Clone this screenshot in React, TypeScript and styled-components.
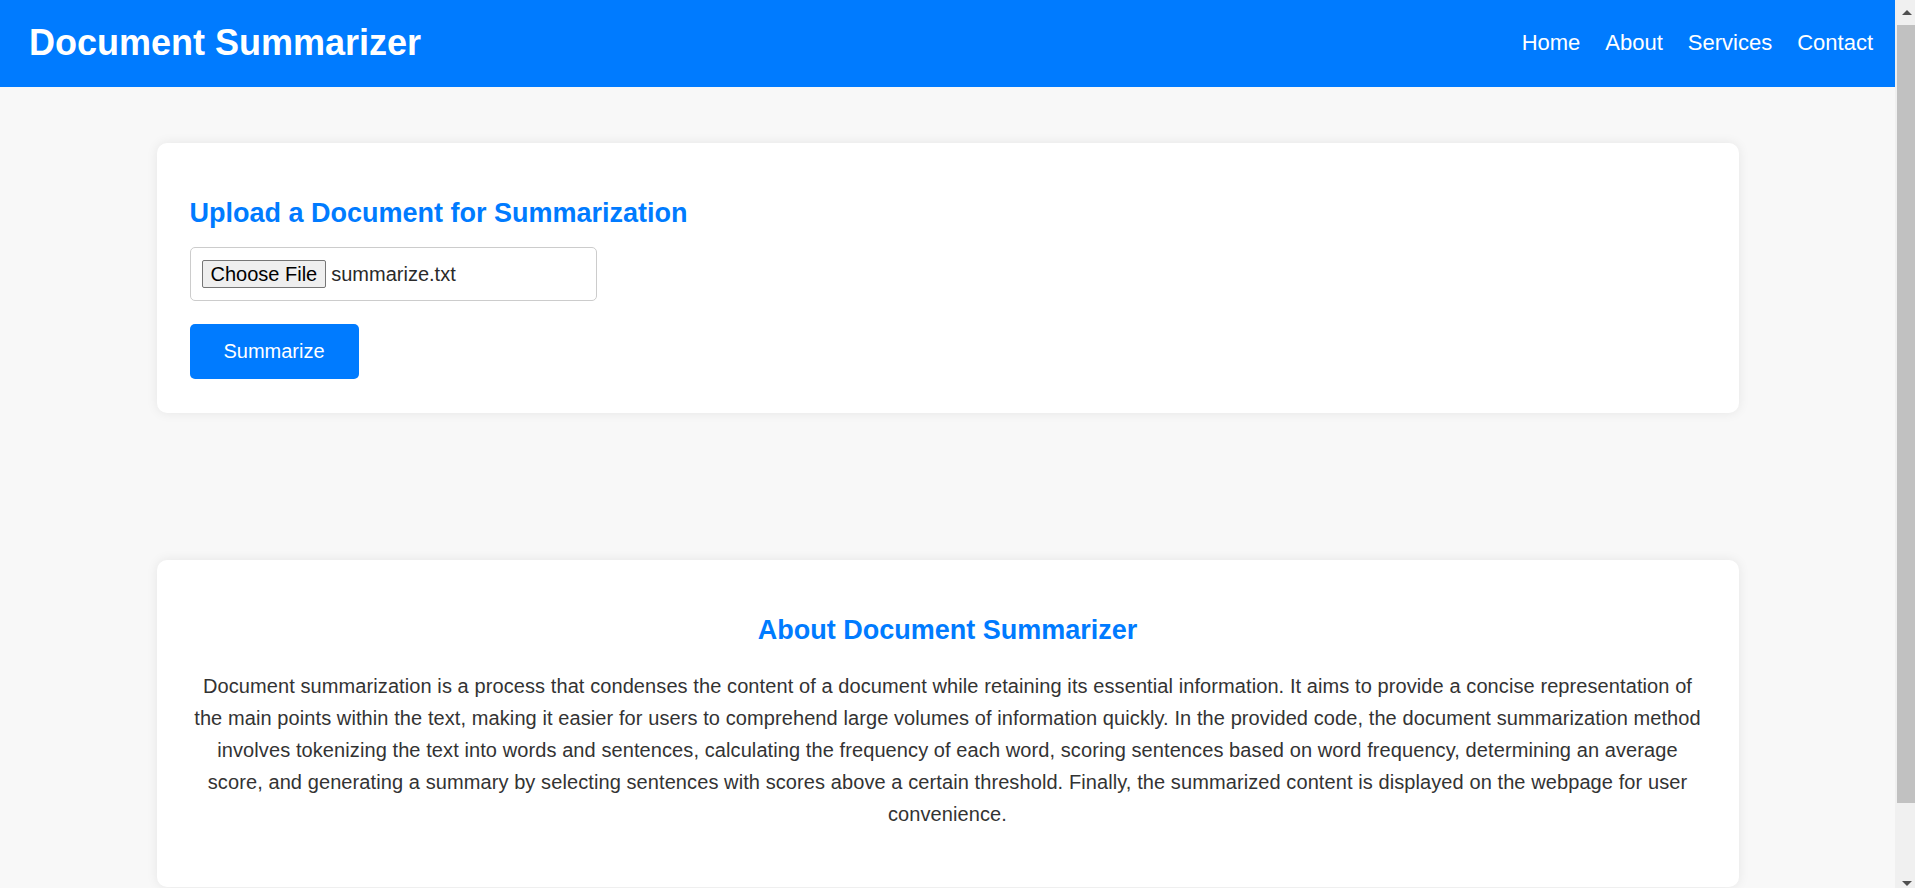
import React from "react";
import styled, { createGlobalStyle } from "styled-components";

const GlobalStyle = createGlobalStyle`
  html, body {
    margin: 0;
    padding: 0;
    overflow: hidden;
  }
  body {
    background: #f8f8f8;
    font-family: "Liberation Sans", Arial, Helvetica, sans-serif;
    color: #333333;
  }
`;

const Window = styled.div`
  display: flex;
  height: 100vh;
  overflow: hidden;
`;

const PageArea = styled.div`
  flex: 1;
  min-width: 0;
  overflow: hidden;
`;

const ScrollRail = styled.div`
  width: 20px;
  flex-shrink: 0;
  background: #f0f0f0;
  display: flex;
  flex-direction: column;
`;

const RailArrow = styled.div<{ $dir: "up" | "down" }>`
  height: ${(p) => (p.$dir === "up" ? 25 : 20)}px;
  flex-shrink: 0;
  box-sizing: border-box;
  display: flex;
  justify-content: center;
  padding-left: 4px;
  padding-top: ${(p) => (p.$dir === "up" ? 10 : 13)}px;
  margin-top: ${(p) => (p.$dir === "down" ? "auto" : "0")};

  &::before {
    content: "";
    width: 0;
    height: 0;
    border-left: 5px solid transparent;
    border-right: 5px solid transparent;
    ${(p) =>
      p.$dir === "up"
        ? "border-bottom: 5px solid #505050;"
        : "border-top: 5px solid #505050;"}
  }
`;

const RailThumb = styled.div`
  height: 778px;
  margin-left: 2px;
  background: #c1c1c1;
`;

const Header = styled.header`
  height: 87px;
  box-sizing: border-box;
  background: #007bff;
  display: flex;
  align-items: center;
  justify-content: space-between;
  padding: 0 22px 2px 29px;
`;

const Brand = styled.h1`
  margin: 0;
  color: #ffffff;
  font-size: 36px;
  font-weight: 700;
  line-height: normal;
`;

const Nav = styled.nav`
  display: flex;
  align-items: center;
  gap: 25px;
`;

const NavLink = styled.a`
  color: #ffffff;
  text-decoration: none;
  font-size: 22px;
  line-height: normal;
`;

const Main = styled.main`
  display: flex;
  flex-direction: column;
  align-items: center;
  padding: 56px 0 79px;
`;

const Card = styled.section<{ $center?: boolean; $gap?: number }>`
  width: 80%;
  background: #ffffff;
  border-radius: 10px;
  box-shadow: 0 0 12px rgba(0, 0, 0, 0.08);
  padding: 33px 33px 34px;
  margin-top: ${(p) => p.$gap ?? 0}px;
  text-align: ${(p) => (p.$center ? "center" : "left")};
`;

const CardTitle = styled.h2`
  margin: 22px 0 18px;
  color: #007bff;
  font-size: 27px;
  font-weight: 700;
  line-height: normal;
`;

const FileField = styled.label`
  display: flex;
  align-items: center;
  width: 407px;
  height: 54px;
  box-sizing: border-box;
  border: 1px solid #cccccc;
  border-radius: 5px;
  padding: 0 11px;
  gap: 5px;
  font-size: 20px;
  cursor: pointer;
`;

const FileButton = styled.span`
  display: inline-flex;
  align-items: center;
  height: 28px;
  box-sizing: border-box;
  padding: 0 8px;
  background: #efefef;
  border: 1px solid #767676;
  border-radius: 2px;
  color: #000000;
  font-size: 20px;
`;

const FileName = styled.span`
  color: #2a2a2a;
  font-size: 20px;
`;

const SubmitButton = styled.button`
  display: block;
  margin-top: 23px;
  width: 169px;
  height: 55px;
  border: none;
  border-radius: 5px;
  background: #007bff;
  color: #ffffff;
  font-family: "Liberation Sans", Arial, sans-serif;
  font-size: 20px;
  cursor: pointer;
`;

const AboutText = styled.p`
  margin: 24px 0 23px;
  font-size: 20px;
  line-height: 32px;
  letter-spacing: 0.09px;
  color: #333333;
`;

export default function App() {
  return (
    <>
      <GlobalStyle />
      <Window>
        <PageArea>
          <Header>
            <Brand>Document Summarizer</Brand>
            <Nav>
              <NavLink href="#">Home</NavLink>
              <NavLink href="#">About</NavLink>
              <NavLink href="#">Services</NavLink>
              <NavLink href="#">Contact</NavLink>
            </Nav>
          </Header>
          <Main>
            <Card>
              <CardTitle>Upload a Document for Summarization</CardTitle>
              <FileField>
                <FileButton>Choose File</FileButton>
                <FileName>summarize.txt</FileName>
              </FileField>
              <SubmitButton type="button">Summarize</SubmitButton>
            </Card>
            <Card $center $gap={147}>
              <CardTitle>About Document Summarizer</CardTitle>
              <AboutText>
                Document summarization is a process that condenses the content
                of a document while retaining its essential information. It aims
                to provide a concise representation of the main points within
                the text, making it easier for users to comprehend large volumes
                of information quickly. In the provided code, the document
                summarization method involves tokenizing the text into words and
                sentences, calculating the frequency of each word, scoring
                sentences based on word frequency, determining an average score,
                and generating a summary by selecting sentences with scores
                above a certain threshold. Finally, the summarized content is
                displayed on the webpage for user convenience.
              </AboutText>
            </Card>
          </Main>
        </PageArea>
        <ScrollRail>
          <RailArrow $dir="up" />
          <RailThumb />
          <RailArrow $dir="down" />
        </ScrollRail>
      </Window>
    </>
  );
}
